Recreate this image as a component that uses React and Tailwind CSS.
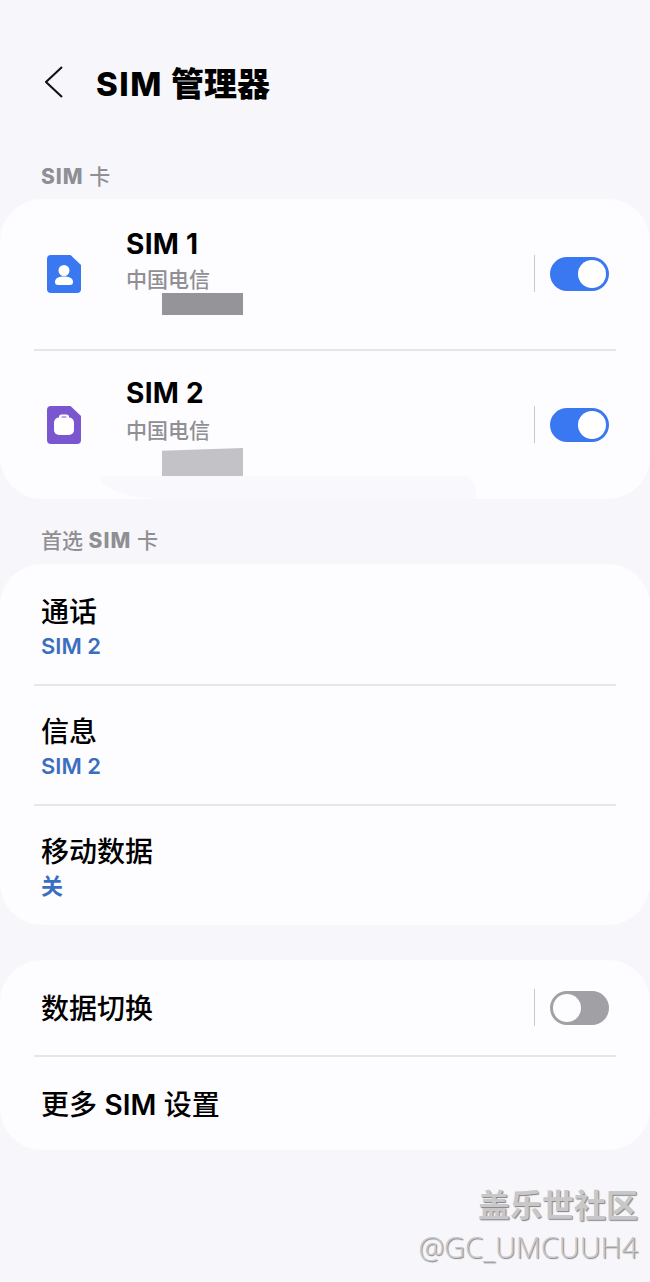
import React from 'react';

const FONT = "font-['Inter','Noto_Sans_CJK_SC',sans-serif]";

function Toggle({ on }) {
  return (
    <div className="flex items-center">
      <div className="w-px h-[37px] bg-[#c9c9cd]" />
      <div className={`ml-[15px] w-[59px] h-[34px] rounded-full p-[3px] flex ${on ? 'bg-[#3a78f2] justify-end' : 'bg-[#a0a0a5] justify-start'}`}>
        <div className={`w-[28px] h-[28px] rounded-full ${on ? 'bg-white' : 'bg-[#fdfcff]'}`} />
      </div>
    </div>
  );
}

function SimIcon({ color, children }) {
  return (
    <svg width="34" height="38" viewBox="0 0 34 38">
      <path d="M4 0H23.5L34 10V34a4 4 0 0 1-4 4H4a4 4 0 0 1-4-4V4a4 4 0 0 1 4-4z" fill={color} />
      {children}
    </svg>
  );
}

function SimRow({ name, icon, block, rowClass, topClass, textClass, subClass }) {
  return (
    <div className={`flex items-start pl-[47px] pr-[41px] ${rowClass}`}>
      <div className={`w-[79px] ${topClass}`}>{icon}</div>
      <div className={`flex-1 ${textClass}`}>
        <div className="text-[28px] leading-[34px] font-bold tracking-[0.3px] text-black">{name}</div>
        <div className={`text-[21px] leading-[30px] font-medium text-[#8f8f94] ${subClass}`}>中国电信</div>
        {block}
      </div>
      <div className={topClass}><Toggle on /></div>
    </div>
  );
}

function PrefRow({ title, value, rowClass }) {
  return (
    <div className={`pl-[41px] ${rowClass}`}>
      <div className="text-[28px] leading-[36px] font-medium text-black">{title}</div>
      <div className="text-[22px] leading-[30px] mt-[1px] font-semibold text-[#3a6fc0]">{value}</div>
    </div>
  );
}

const Divider = () => <div className="mx-[34px] h-[2px] bg-[#e6e5ea]" />;

function SectionLabel({ children, className }) {
  return <div className={`pl-[41px] text-[21px] leading-[28px] font-medium text-[#8f8f94] ${className}`}>{children}</div>;
}

const Sim = () => <span className="tracking-[1px] font-extrabold">SIM</span>;

export default function App() {
  return (
    <div className={`relative w-[650px] h-[1282px] overflow-hidden bg-[#f7f7fb] ${FONT}`}>
      {/* header */}
      <div className="flex items-center h-[62px] mt-[53px] pl-[45px]">
        <svg className="-mt-[5px]" width="18" height="32" viewBox="0 0 18 32" fill="none" stroke="#111" strokeWidth="2.1">
          <path d="M17 1 1 16 17 31" />
        </svg>
        <div className="ml-[33px] text-[33px] leading-[40px] font-extrabold text-black">
          <span className="tracking-[1.5px] mr-[1px]">SIM</span> 管理器
        </div>
      </div>

      <SectionLabel className="mt-[48px]"><Sim /> 卡</SectionLabel>

      <div className="relative mt-[8px] bg-[#fdfcff] rounded-[42px]">
        <SimRow
          name="SIM 1"
          rowClass="h-[150px]"
          topClass="pt-[56px]"
          textClass="pt-[28px]"
          subClass="mt-[4px]"
          block={<div className="ml-[36px] -mt-[2px] w-[81px] h-[22px] bg-[#949499]" />}
          icon={
            <SimIcon color="#3a78f2">
              <circle cx="17" cy="15.5" r="5.5" fill="#fff" />
              <path d="M8 27c0-4 4-5.5 9-5.5s9 1.500 9 5.500a3 3 0 0 1-3 3H11a3 3 0 0 1-3-3z" fill="#fff" />
            </SimIcon>
          }
        />
        <Divider />
        <SimRow
          name="SIM 2"
          rowClass="h-[148px]"
          topClass="pt-[55px]"
          textClass="pt-[25px]"
          subClass="mt-[6px]"
          block={<div className="ml-[36px] mt-[2px] w-[81px] h-[28px] bg-[#c3c2c7] [clip-path:polygon(0_10%,100%_0,100%_100%,0_100%)]" />}
          icon={
            <SimIcon color="#7a57d1">
              <rect x="12" y="8.500" width="10" height="7" rx="2.500" fill="#fff" />
              <rect x="14.500" y="10.500" width="5" height="1.800" fill="#7a57d1" />
              <rect x="7" y="11.500" width="20" height="17.500" rx="5" fill="#fff" />
            </SimIcon>
          }
        />
        {/* smudge over the bottom edge of the card */}
        <div className="absolute left-[100px] top-[277px] w-[376px] h-[23px] bg-[#f9f8fc] rounded-bl-[65px_23px] rounded-tr-[10px_22px]" />
      </div>

      <SectionLabel className="mt-[28px]">首选 <Sim /> 卡</SectionLabel>

      <div className="mt-[9px] bg-[#fdfcff] rounded-[42px]">
        <PrefRow title="通话" value="SIM 2" rowClass="h-[120px] pt-[30px]" />
        <Divider />
        <PrefRow title="信息" value="SIM 2" rowClass="h-[118px] pt-[28px]" />
        <Divider />
        <PrefRow title="移动数据" value="关" rowClass="h-[119px] pt-[28px]" />
      </div>

      <div className="mt-[35px] bg-[#fdfcff] rounded-[42px]">
        <div className="h-[95px] flex items-center justify-between pl-[41px] pr-[41px]">
          <div className="text-[28px] pt-[3px] font-medium text-black">数据切换</div>
          <Toggle on={false} />
        </div>
        <Divider />
        <div className="h-[93px] flex items-center pl-[41px]">
          <div className="text-[28px] pt-[3px] font-medium text-black">更多 <span className="font-semibold">SIM</span> 设置</div>
        </div>
      </div>

      {/* watermark */}
      <div className="absolute right-[12px] top-[1185px] flex flex-col items-end text-[#c8c8ca] [text-shadow:1px_1px_1px_#808084]">
        <div className="text-[32px] leading-[42px] font-bold">盖乐世社区</div>
        <div className="text-[29px] leading-[40px] font-light font-['Open_Sans',sans-serif]">@GC_UMCUUH4</div>
      </div>
    </div>
  );
}
